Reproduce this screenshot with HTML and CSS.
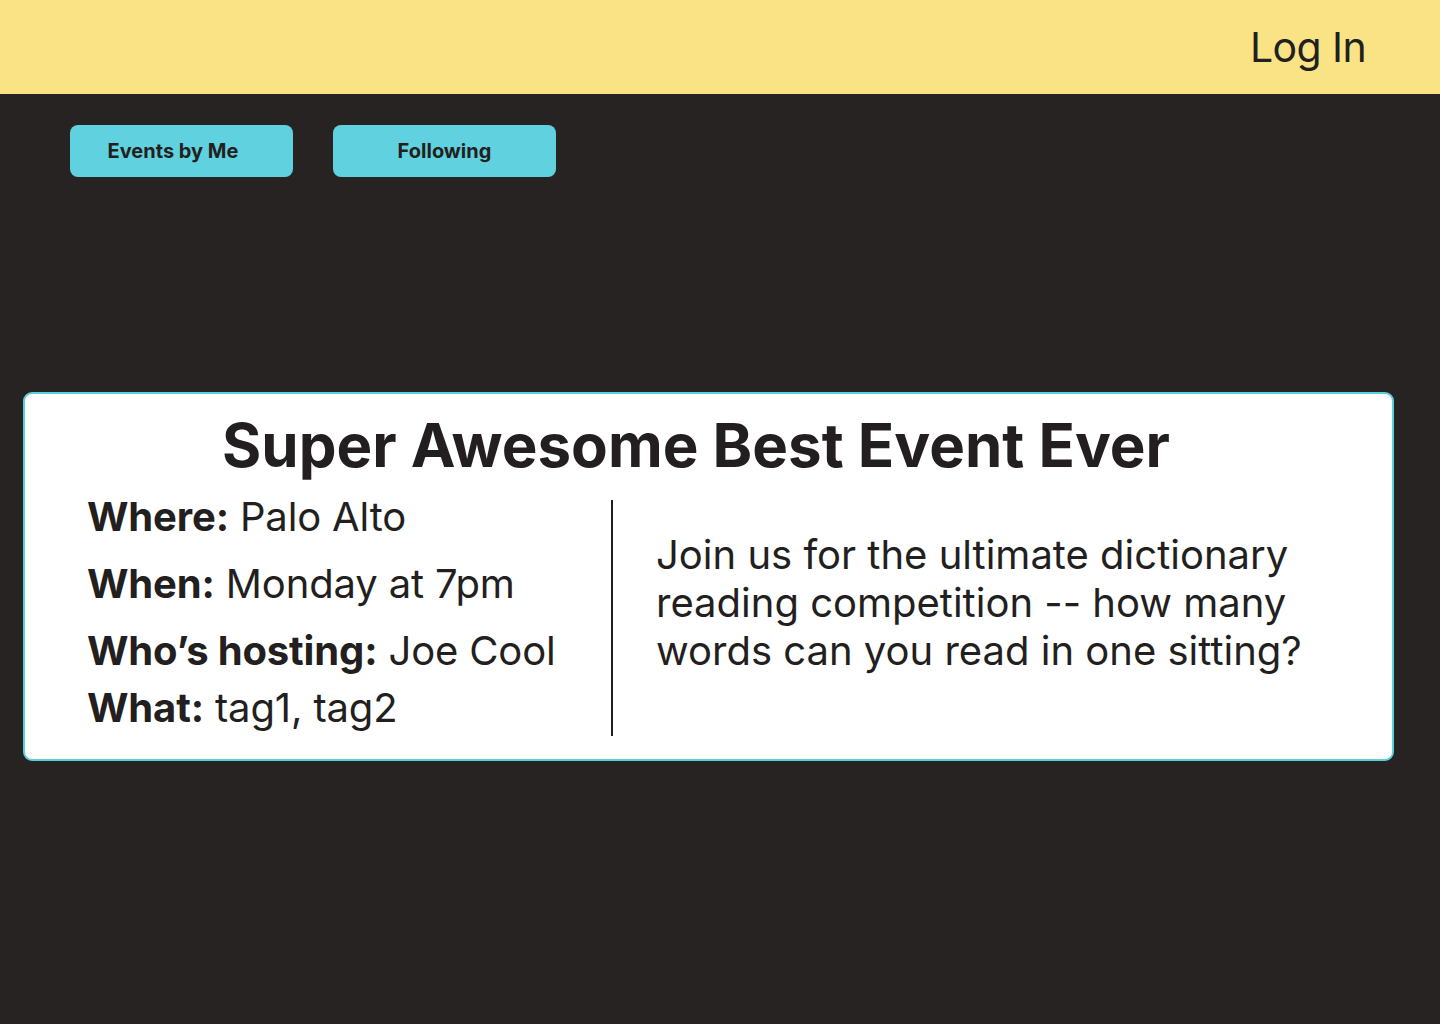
FILE: index.html
```html
<!DOCTYPE html>
<html lang="en">
<head>
<meta charset="utf-8">
<title>Events</title>
<link rel="stylesheet" href="styles.css">
</head>
<body>
<header class="topbar">
  <a class="login" href="#">Log In</a>
</header>
<nav class="tabs">
  <button class="tab tab-mine">Events by Me</button>
  <button class="tab">Following</button>
</nav>
<main class="content">
  <section class="card">
    <h1 class="card-title">Super Awesome Best Event Ever</h1>
    <div class="card-body">
      <div class="details">
        <p class="detail detail-1"><b>Where:</b> Palo Alto</p>
        <p class="detail detail-2"><b>When:</b> Monday at 7pm</p>
        <p class="detail detail-3"><b>Who’s hosting:</b> Joe Cool</p>
        <p class="detail detail-4"><b>What:</b> tag1, tag2</p>
      </div>
      <div class="divider"></div>
      <p class="description">Join us for the ultimate dictionary reading competition -- how many words can you read in one sitting?</p>
    </div>
  </section>
</main>
</body>
</html>
```

FILE: styles.css
```css
* { box-sizing: border-box; }
html, body { margin: 0; padding: 0; }
body {
  background: #272322;
  font-family: Inter, "Noto Sans", sans-serif;
  color: #231f20;
  width: 1440px;
  min-height: 1024px;
}
.topbar {
  height: 94px;
  background: #fae385;
  display: flex;
  align-items: center;
  justify-content: flex-end;
  padding-right: 74px;
}
.login {
  font-size: 41px;
  letter-spacing: -0.6px;
  color: #231f20;
  text-decoration: none;
  line-height: 1;
  margin-top: 0;
}
.tabs {
  display: flex;
  gap: 40px;
  padding: 31px 0 0 70px;
}
.tab {
  width: 223px;
  height: 52px;
  border: none;
  border-radius: 8px;
  background: #60d1df;
  color: #231f20;
  font-family: Inter, "Noto Sans", sans-serif;
  font-weight: 700;
  font-size: 20px;
  padding: 0;
  cursor: pointer;
}
.tab-mine { padding-right: 17px; }
.content {
  padding: 215px 0 0 23px;
}
.card {
  width: 1371px;
  background: #fff;
  border: 2px solid #5ccfdd;
  border-radius: 9px;
  padding: 16px 0 23px 0;
}
.card-title {
  margin: 0;
  font-size: 60px;
  font-weight: 700;
  line-height: 70px;
  text-align: center;
  padding-right: 25px;
}
.card-body {
  display: flex;
  align-items: flex-start;
  margin-top: 15px;
}
.details {
  flex: 0 0 524px;
  margin-left: 62px;
}
.detail {
  margin: 0;
  font-size: 40px;
  line-height: 44px;
  letter-spacing: -0.15px;
}
.detail b { font-weight: 700; }
.detail-2 { margin-top: 23px; }
.detail-3 { margin-top: 23px; }
.detail-4 { margin-top: 13px; }
.divider {
  flex: 0 0 2px;
  height: 236px;
  margin-top: 5px;
  background: #231f20;
}
.description {
  margin: 36px 0 0 43px;
  font-size: 40px;
  line-height: 48px;
  width: 690px;
}
```
